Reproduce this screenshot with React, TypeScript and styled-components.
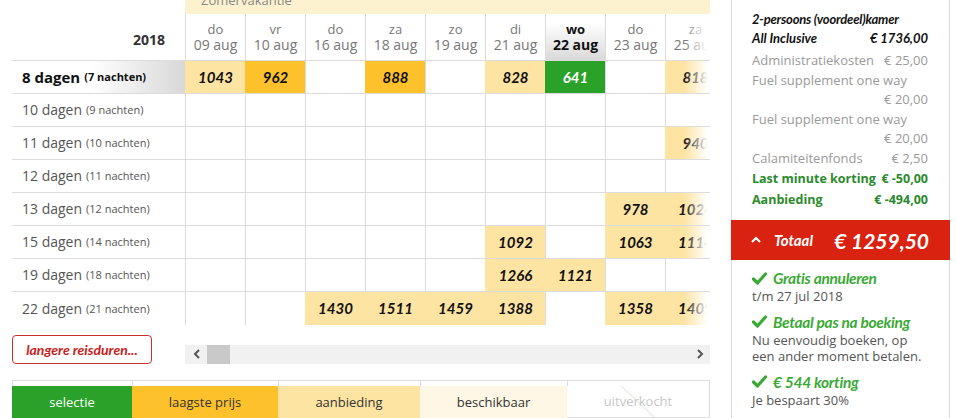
import React from "react";
import styled, { createGlobalStyle, css } from "styled-components";

const Global = createGlobalStyle`
  html, body { margin: 0; padding: 0; background: #fff; }
  body { font-family: "Open Sans", "Liberation Sans", sans-serif; color: #333; }
  * { box-sizing: border-box; }
`;

type Kind = "a" | "l" | "s" | "";

const COLORS = {
  s: "#2aa22a",
  l: "#fdc22b",
  a: "#fde4a2",
  b: "#fef7e6",
  border: "#dcdcdc",
};

const dates = [
  ["do", "09 aug"],
  ["vr", "10 aug"],
  ["do", "16 aug"],
  ["za", "18 aug"],
  ["zo", "19 aug"],
  ["di", "21 aug"],
  ["wo", "22 aug"],
  ["do", "23 aug"],
  ["za", "25 aug"],
];

type Cell = [string, Kind];
const E: Cell = ["", ""];

const rows: { days: string; nights: string; cells: Cell[]; active?: boolean }[] = [
  {
    days: "8 dagen",
    nights: "(7 nachten)",
    active: true,
    cells: [["1043", "a"], ["962", "l"], E, ["888", "l"], E, ["828", "a"], ["641", "s"], E, ["818", "a"]],
  },
  { days: "10 dagen", nights: "(9 nachten)", cells: [E, E, E, E, E, E, E, E, E] },
  { days: "11 dagen", nights: "(10 nachten)", cells: [E, E, E, E, E, E, E, E, ["940", "a"]] },
  { days: "12 dagen", nights: "(11 nachten)", cells: [E, E, E, E, E, E, E, E, E] },
  { days: "13 dagen", nights: "(12 nachten)", cells: [E, E, E, E, E, E, E, ["978", "a"], ["1024", "a"]] },
  { days: "15 dagen", nights: "(14 nachten)", cells: [E, E, E, E, E, ["1092", "a"], E, ["1063", "a"], ["1114", "a"]] },
  { days: "19 dagen", nights: "(18 nachten)", cells: [E, E, E, E, E, ["1266", "a"], ["1121", "a"], E, E] },
  {
    days: "22 dagen",
    nights: "(21 nachten)",
    cells: [E, E, ["1430", "a"], ["1511", "a"], ["1459", "a"], ["1388", "a"], E, ["1358", "a"], ["1409", "a"]],
  },
];

const Page = styled.div`
  display: flex;
  width: 956px;
  height: 418px;
  overflow: hidden;
`;

const Left = styled.div`
  width: 710px;
  padding-left: 12px;
  display: flex;
  flex-direction: column;
`;

const Band = styled.div`
  margin-left: 173px;
  width: 525px;
  height: 14px;
  background: #fdf2cf;
  overflow: hidden;
  font-size: 13px;
  color: #888;
  padding-left: 16px;
`;

const BandText = styled.div`
  line-height: 14px;
  margin-top: -7px;
`;

const Row = styled.div<{ $last?: boolean; $header?: boolean }>`
  display: flex;
  flex: 0 0 auto;
  height: ${(p) => (p.$header ? 47 : 33)}px;
  border-bottom: ${(p) => (p.$last ? "none" : `1px solid ${COLORS.border}`)};
`;

const YearCell = styled.div`
  width: 173px;
  display: flex;
  align-items: center;
  justify-content: flex-end;
  padding-right: 20px;
  padding-top: 6px;
  font-weight: 700;
  font-size: 14px;
  color: #333;
`;

const RowLabel = styled.div<{ $active?: boolean }>`
  width: 173px;
  display: flex;
  align-items: center;
  gap: 4px;
  padding-left: 10px;
  font-size: 14px;
  color: ${(p) => (p.$active ? "#111" : "#555")};
  font-weight: ${(p) => (p.$active ? 700 : 400)};
  ${(p) =>
    p.$active &&
    css`
      background: linear-gradient(to right, #ffffff 45%, #d8d8d8 100%);
      font-size: 15px;
    `}
`;

const Nights = styled.span`
  font-size: 11px;
`;

const Viewport = styled.div`
  position: relative;
  width: 525px;
  overflow: hidden;
  &::after {
    content: "";
    position: absolute;
    top: 0;
    right: 0;
    bottom: 0;
    width: 26px;
    background: linear-gradient(to right, rgba(255, 255, 255, 0), #fff 90%);
  }
`;

const Track = styled.div`
  display: flex;
  height: 100%;
`;

const DateCell = styled.div<{ $sel?: boolean }>`
  flex: 0 0 60px;
  border-left: 1px solid ${COLORS.border};
  display: flex;
  flex-direction: column;
  align-items: center;
  justify-content: center;
  padding-top: 1px;
  line-height: 16px;
  color: #777;
  ${(p) =>
    p.$sel &&
    css`
      background: linear-gradient(to bottom, #ffffff 0%, #ffffff 20%, #d9d9d9 100%);
      color: #111;
      font-weight: 700;
    `}
`;

const DayName = styled.div`
  font-size: 13px;
`;

const DayDate = styled.div`
  font-size: 14px;
`;

const bgFor = (k: Kind) => (k === "s" ? COLORS.s : k === "l" ? COLORS.l : k === "a" ? COLORS.a : "transparent");

const PriceCell = styled.div<{ $kind: Kind }>`
  flex: 0 0 60px;
  border-left: 1px solid ${(p) => (p.$kind ? bgFor(p.$kind) : COLORS.border)};
  background: ${(p) => bgFor(p.$kind)};
  display: flex;
  align-items: center;
  justify-content: center;
  font-family: "Lato", "Open Sans", sans-serif;
  font-style: italic;
  font-weight: 700;
  font-size: 15px;
  color: ${(p) => (p.$kind === "s" ? "#fff" : "#111")};
`;

const Controls = styled.div`
  display: flex;
  align-items: flex-end;
  margin-top: 10px;
  height: 29px;
`;

const MoreButton = styled.button`
  width: 140px;
  height: 29px;
  margin-right: 33px;
  border: 1px solid #c9302a;
  border-radius: 4px;
  background: #fff;
  color: #c8201a;
  font-family: "Lato", "Open Sans", sans-serif;
  font-style: italic;
  font-weight: 700;
  font-size: 14px;
  padding: 0;
`;

const Scrollbar = styled.div`
  width: 525px;
  height: 19px;
  background: #f1f1f1;
  display: flex;
  align-items: center;
  padding: 0 6px 0 8px;
`;

const Thumb = styled.div`
  width: 23px;
  height: 19px;
  background: #c9c9c9;
  margin-left: 6px;
`;

const Spacer = styled.div`
  flex: 1;
`;

const Legend = styled.div`
  display: flex;
  margin-top: 16px;
  height: 39px;
`;

const LegendItem = styled.div<{ $w: number; $last?: boolean }>`
  width: ${(p) => p.$w}px;
  border-top: 1px solid ${COLORS.border};
  border-left: 1px solid ${COLORS.border};
  ${(p) =>
    p.$last &&
    css`
      border-right: 1px solid ${COLORS.border};
      border-bottom: 1px solid ${COLORS.border};
    `}
  padding-top: 5px;
  display: flex;
  flex-direction: column;
`;

const Swatch = styled.div<{ $bg: string; $fg: string }>`
  position: relative;
  flex: 1;
  margin-left: -1px;
  background: ${(p) => p.$bg};
  color: ${(p) => p.$fg};
  font-size: 13px;
  display: flex;
  align-items: center;
  justify-content: center;
  overflow: hidden;
`;

const SwatchLabel = styled.span`
  position: relative;
`;

const Strike = styled.svg`
  position: absolute;
  left: 0;
  top: -6px;
  width: 142px;
  height: 40px;
`;

const Panel = styled.div`
  margin-left: 21px;
  width: 219px;
  display: flex;
  flex-direction: column;
`;

const Section = styled.div<{ $top?: boolean }>`
  border-left: 1px solid ${COLORS.border};
  border-right: 1px solid ${COLORS.border};
  padding: ${(p) => (p.$top ? "10px 21px 10px 20px" : "8px 10px 10px 20px")};
  flex: ${(p) => (p.$top ? "0 0 auto" : "1")};
`;

const RoomTitle = styled.div`
  font-family: "Lato", "Open Sans", sans-serif;
  font-style: italic;
  font-weight: 700;
  font-size: 13px;
  line-height: 19px;
  color: #111;
  letter-spacing: -0.2px;
`;

const Line = styled.div<{ $tone: "main" | "grey" | "green" }>`
  display: flex;
  justify-content: space-between;
  ${(p) =>
    p.$tone === "main"
      ? css`
          font-family: "Lato", "Open Sans", sans-serif;
          font-style: italic;
          font-weight: 700;
          font-size: 13px;
          line-height: 19px;
          margin-bottom: 3px;
          color: #111;
        `
      : p.$tone === "grey"
      ? css`
          font-size: 13px;
          line-height: 19.5px;
          color: #9a9a9a;
        `
      : css`
          font-size: 12.5px;
          font-weight: 700;
          line-height: 21px;
          color: #2b8a2b;
        `}
`;

const Amount = styled.div`
  text-align: right;
  flex: 1;
`;

const TotalBar = styled.div`
  height: 44px;
  background: #da2211;
  color: #fff;
  display: flex;
  align-items: center;
  padding: 0 21px 0 20px;
  font-family: "Lato", "Open Sans", sans-serif;
  font-style: italic;
  font-weight: 700;
`;

const TotalLabel = styled.div`
  font-size: 15px;
  margin-left: 13px;
`;

const TotalValue = styled.div`
  margin-left: auto;
  font-size: 21px;
`;

const Perk = styled.div`
  & + & {
    margin-top: 7px;
  }
`;

const PerkTitle = styled.div`
  display: flex;
  align-items: center;
  gap: 6px;
  height: 20px;
  font-family: "Lato", "Open Sans", sans-serif;
  font-style: italic;
  font-weight: 700;
  font-size: 15.5px;
  color: #3aaa35;
  letter-spacing: -0.3px;
`;

const PerkText = styled.div`
  font-size: 13px;
  line-height: 16.5px;
  color: #555;
`;

const Check = () => (
  <svg width="15" height="13" viewBox="0 0 15 13">
    <polyline points="1.5,7 5.5,11 13.5,2" fill="none" stroke="#3aaa35" strokeWidth="3.2" strokeLinecap="round" strokeLinejoin="round" />
  </svg>
);

const Chevron = ({ dir }: { dir: "left" | "right" | "up" }) => {
  const pts = dir === "left" ? "6,1 2,5 6,9" : dir === "right" ? "2,1 6,5 2,9" : "1,6 5,2 9,6";
  const w = dir === "up" ? 10 : 8;
  const h = dir === "up" ? 8 : 10;
  return (
    <svg width={w} height={h} viewBox={`0 0 ${w} ${h}`}>
      <polyline points={pts} fill="none" stroke={dir === "up" ? "#fff" : "#555"} strokeWidth="2" />
    </svg>
  );
};

const legend = [
  { label: "selectie", w: 120, bg: COLORS.s, fg: "#fff" },
  { label: "laagste prijs", w: 146, bg: COLORS.l, fg: "#333" },
  { label: "aanbieding", w: 142, bg: COLORS.a, fg: "#333" },
  { label: "beschikbaar", w: 147, bg: COLORS.b, fg: "#333" },
  { label: "uitverkocht", w: 143, bg: "#fff", fg: "#c8c8c8" },
];

export default function App() {
  return (
    <>
      <Global />
      <Page>
        <Left>
          <Band>
            <BandText>Zomervakantie</BandText>
          </Band>
          <Row $header>
            <YearCell>2018</YearCell>
            <Viewport>
              <Track>
                {dates.map(([d, dt], i) => (
                  <DateCell key={i} $sel={i === 6}>
                    <DayName>{d}</DayName>
                    <DayDate>{dt}</DayDate>
                  </DateCell>
                ))}
              </Track>
            </Viewport>
          </Row>
          {rows.map((r, ri) => (
            <Row key={ri} $last={ri === rows.length - 1}>
              <RowLabel $active={r.active}>
                {r.days} <Nights>{r.nights}</Nights>
              </RowLabel>
              <Viewport>
                <Track>
                  {r.cells.map(([v, k], ci) => (
                    <PriceCell key={ci} $kind={k}>
                      {v}
                    </PriceCell>
                  ))}
                </Track>
              </Viewport>
            </Row>
          ))}
          <Controls>
            <MoreButton>langere reisduren...</MoreButton>
            <Scrollbar>
              <Chevron dir="left" />
              <Thumb />
              <Spacer />
              <Chevron dir="right" />
            </Scrollbar>
          </Controls>
          <Legend>
            {legend.map((l, i) => (
              <LegendItem key={l.label} $w={l.w} $last={i === legend.length - 1}>
                <Swatch $bg={l.bg} $fg={l.fg}>
                  {i === legend.length - 1 && (
                    <Strike viewBox="0 0 142 40">
                      <line x1="48" y1="0" x2="90" y2="40" stroke="#dcdcdc" strokeWidth="1" />
                    </Strike>
                  )}
                  <SwatchLabel>{l.label}</SwatchLabel>
                </Swatch>
              </LegendItem>
            ))}
          </Legend>
        </Left>
        <Panel>
          <Section $top>
            <RoomTitle>2-persoons (voordeel)kamer</RoomTitle>
            <Line $tone="main">
              <span>All Inclusive</span>
              <Amount>€ 1736,00</Amount>
            </Line>
            <Line $tone="grey">
              <span>Administratiekosten</span>
              <Amount>€ 25,00</Amount>
            </Line>
            <Line $tone="grey">
              <span>Fuel supplement one way</span>
            </Line>
            <Line $tone="grey">
              <Amount>€ 20,00</Amount>
            </Line>
            <Line $tone="grey">
              <span>Fuel supplement one way</span>
            </Line>
            <Line $tone="grey">
              <Amount>€ 20,00</Amount>
            </Line>
            <Line $tone="grey">
              <span>Calamiteitenfonds</span>
              <Amount>€ 2,50</Amount>
            </Line>
            <Line $tone="green">
              <span>Last minute korting</span>
              <Amount>€ -50,00</Amount>
            </Line>
            <Line $tone="green">
              <span>Aanbieding</span>
              <Amount>€ -494,00</Amount>
            </Line>
          </Section>
          <TotalBar>
            <Chevron dir="up" />
            <TotalLabel>Totaal</TotalLabel>
            <TotalValue>€ 1259,50</TotalValue>
          </TotalBar>
          <Section>
            <Perk>
              <PerkTitle>
                <Check />
                Gratis annuleren
              </PerkTitle>
              <PerkText>t/m 27 jul 2018</PerkText>
            </Perk>
            <Perk>
              <PerkTitle>
                <Check />
                Betaal pas na boeking
              </PerkTitle>
              <PerkText>
                Nu eenvoudig boeken, op
                <br />
                een ander moment betalen.
              </PerkText>
            </Perk>
            <Perk>
              <PerkTitle>
                <Check />€ 544 korting
              </PerkTitle>
              <PerkText>Je bespaart 30%</PerkText>
            </Perk>
          </Section>
        </Panel>
      </Page>
    </>
  );
}
